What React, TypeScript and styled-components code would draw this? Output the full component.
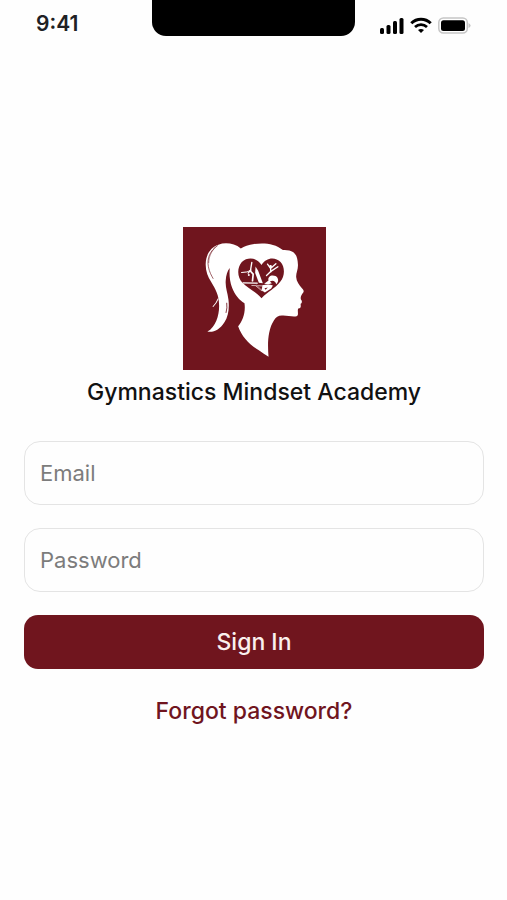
import React, { useState } from "react";
import styled, { createGlobalStyle } from "styled-components";

const maroon = "#70151e";

const GlobalStyle = createGlobalStyle`
  *, *::before, *::after { box-sizing: border-box; }
  body {
    margin: 0;
    background: #fefefe;
    color: #111;
    font-family: Inter, "Liberation Sans", sans-serif;
  }
`;

const Screen = styled.div`
  display: flex;
  flex-direction: column;
  min-height: 100vh;
`;

const StatusBar = styled.header`
  display: grid;
  grid-template-columns: 1fr 40% 1fr;
  align-items: start;
`;

const Clock = styled.time`
  padding: 12px 0 0 36px;
  font-size: 21px;
  line-height: 24px;
  font-weight: 600;
  color: #202124;
`;

const Notch = styled.div`
  height: 36px;
  border-radius: 0 0 14px 14px;
  background: #000;
`;

const StatusIcons = styled.div`
  display: flex;
  justify-content: flex-end;
  align-items: center;
  gap: 6px;
  padding: 17px 36px 0 0;

  svg { display: block; flex: none; }
`;

const Main = styled.main`
  display: flex;
  flex-direction: column;
  align-items: center;
  padding: 191px 23px 24px 24px;
`;

const Title = styled.h1`
  margin: 8px 0 35px;
  font-size: 23px;
  line-height: 28px;
  font-weight: 500;
  text-align: center;
  color: #111;
`;

const Form = styled.form`
  display: flex;
  flex-direction: column;
  gap: 23px;
  width: 100%;
`;

const Field = styled.input`
  width: 100%;
  height: 64px;
  padding: 0 15px;
  border: 1px solid #e4e4e4;
  border-radius: 16px;
  background: #fefefe;
  font: inherit;
  font-size: 22px;
  color: #111;

  &::placeholder { color: #7c7c7c; opacity: 1; }
  &:focus { outline: 2px solid ${maroon}; }
`;

const SubmitButton = styled.button`
  height: 54px;
  border: 0;
  border-radius: 14px;
  background: ${maroon};
  color: #faf0ee;
  font: inherit;
  font-size: 23px;
  font-weight: 500;
  cursor: pointer;
`;

const ForgotLink = styled.a`
  margin-top: 28px;
  font-size: 23px;
  line-height: 28px;
  font-weight: 500;
  color: ${maroon};
  text-decoration: none;
`;

const Signal = () => (
  <svg width="24" height="17" viewBox="0 0 24 17" aria-hidden="true">
    <rect x="0" y="11" width="4" height="6" rx="1.5" />
    <rect x="6.5" y="8" width="4" height="9" rx="1.5" />
    <rect x="13" y="4" width="4" height="13" rx="1.5" />
    <rect x="19.5" y="1" width="4" height="16" rx="1.5" />
  </svg>
);

const Wifi = () => (
  <svg width="22" height="17" viewBox="0 0 22 17" fill="none" stroke="#000" aria-hidden="true">
    <path d="M1.3 6.2C6.8.8 15.2.8 20.7 6.2" strokeWidth="3" strokeLinecap="butt" />
    <path d="M5 10C8.5 6.8 13.5 6.8 17 10" strokeWidth="2.8" />
    <path d="M8 13.1C9.7 11.5 12.3 11.5 14 13.1L11 16.1Z" fill="#000" stroke="none" />
  </svg>
);

const Battery = () => (
  <svg width="33" height="17" viewBox="0 0 33 17" aria-hidden="true">
    <rect x=".8" y="1" width="28.5" height="15" rx="4.5" fill="#fff" stroke="#c6c6c6" strokeWidth="1.5" />
    <rect x="3" y="3.2" width="24" height="10.8" rx="2.5" />
    <path d="M30.5 6Q32.6 7 32.6 8.5T30.5 11Z" fill="#c6c6c6" />
  </svg>
);

const Logo = () => (
  <svg width="143" height="143" viewBox="22 20 428 428" role="img" aria-label="Gymnastics Mindset Academy logo">
    <rect x="22" y="20" width="428" height="428" fill={maroon} />
    <path
      fill="#fff"
      d="M195 84C176 69 149 65 128 73C104 81 91 103 90 129C89 151 96 168 106 184C119 206 130 224 130 254C131 281 121 319 95 333C113 337 132 327 146 305C158 287 161 262 158 237C155 215 148 200 150 179C151 164 155 151 162 143C160 162 162 184 169 202C177 223 191 240 206 248C210 275 201 301 187 317C198 350 223 373 249 389C259 396 269 403 278 408C275 372 275 329 294 300C300 290 307 285 318 285C334 284 350 290 362 287C370 284 363 270 367 264C377 263 374 255 374 250C379 247 379 241 375 237C373 231 375 224 382 216C385 211 382 208 378 203C370 193 361 182 361 171C359 159 367 149 366 132C365 112 361 99 348 93C338 88 327 90 321 89C297 69 263 67 235 71C218 73 205 78 195 84Z"
    />
    <g fill="none" stroke={maroon} strokeLinecap="round">
      <path d="M125 76C103 91 93 113 98 139C101 155 107 165 112 174" strokeWidth="2" />
      <path d="M119 80C105 96 99 111 99 127" strokeWidth="1.4" />
      <path d="M127 235Q122 248 112 258" stroke="#fff" strokeWidth="3" />
      <path d="M153 248Q155 262 151 276" strokeWidth="2.5" />
    </g>
    <path
      fill={maroon}
      d="M257 233C237 211 216 204 200 187C184 169 183 143 198 125C216 108 244 112 257 134C270 111 298 108 314 125C328 141 327 167 313 184C298 204 276 213 257 233Z"
    />
    <g fill="none" stroke="#fff" strokeLinecap="round" strokeLinejoin="round">
      <path d="M228 126L224 150L217 158" strokeWidth="4" />
      <path d="M197 156L212 155L226 149" strokeWidth="3" />
      <path d="M223 151L232 161L230 181" strokeWidth="5" />
      <path d="M202 187L244 188" strokeWidth="4" />
      <path d="M272 165L286 152L306 139" strokeWidth="4" />
      <path d="M275 131L284 144L300 130M284 144L285 154" strokeWidth="4" />
      <path d="M228 195L277 197M241 197L258 211" strokeWidth="2" />
      <path d="M242 194L256 208" stroke="#b6787c" strokeWidth="3" />
    </g>
    <circle cx="219" cy="164" r="3" fill="#fff" />
    <circle cx="284" cy="138" r="4" fill="#fff" />
    <path d="M239 138L247 151L261 188L249 187L238 158Z" fill="#fff" />
    <path d="M278 180C274 168 288 161 299 167C309 173 309 185 301 191C299 181 290 178 282 183L288 188L278 191L265 190Z" fill="#fff" />
    <path d="M260 194Q279 190 291 195L286 204L267 216L257 209Z" fill="#fff" />
    <path d="M266 203L276 201L269 208Z" fill={maroon} />
  </svg>
);

export default function App() {
  const [email, setEmail] = useState("");
  const [password, setPassword] = useState("");

  return (
    <Screen>
      <GlobalStyle />
      <StatusBar>
        <Clock>9:41</Clock>
        <Notch />
        <StatusIcons>
          <Signal />
          <Wifi />
          <Battery />
        </StatusIcons>
      </StatusBar>
      <Main>
        <Logo />
        <Title>Gymnastics Mindset Academy</Title>
        <Form onSubmit={(event) => event.preventDefault()}>
          <Field
            type="email"
            aria-label="Email"
            placeholder="Email"
            value={email}
            onChange={(event) => setEmail(event.target.value)}
          />
          <Field
            type="password"
            aria-label="Password"
            placeholder="Password"
            value={password}
            onChange={(event) => setPassword(event.target.value)}
          />
          <SubmitButton type="submit">Sign In</SubmitButton>
        </Form>
        <ForgotLink href="#forgot-password">Forgot password?</ForgotLink>
      </Main>
    </Screen>
  );
}
